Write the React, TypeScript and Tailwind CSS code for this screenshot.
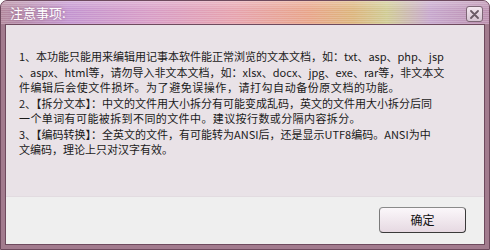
const lines = [
  { text: "1、本功能只能用来编辑用记事本软件能正常浏览的文本文档，如：txt、asp、php、jsp", tracking: "" },
  { text: "、aspx、html等，请勿导入非文本文档，如：xlsx、docx、jpg、exe、rar等，非文本文", tracking: "" },
  { text: "件编辑后会使文件损坏。为了避免误操作，请打勾自动备份原文档的功能。", tracking: "tracking-[0.55px]" },
  { text: "2、【拆分文本】：中文的文件用大小拆分有可能变成乱码，英文的文件用大小拆分后同", tracking: "" },
  { text: "一个单词有可能被拆到不同的文件中。建议按行数或分隔内容拆分。", tracking: "tracking-[0.4px]" },
  { text: "3、【编码转换】：全英文的文件，有可能转为ANSI后，还是显示UTF8编码。ANSI为中", tracking: "" },
  { text: "文编码，理论上只对汉字有效。", tracking: "" },
];

const App = () => {
  return (
    <div className="w-[490px] h-[250px] flex flex-col overflow-hidden rounded-t-[7px] border border-[#6e4a5e] bg-[#a27b8e] font-['Noto_Sans_CJK_SC',sans-serif]">
      {/* title bar */}
      <div className="relative h-[23px] shrink-0 flex items-center px-[9px] bg-[linear-gradient(to_right,#b3889d_0%,#c394cf_14%,#d79cc6_30%,#e6a2ad_48%,#e8a489_63%,#dcb47c_72%,#cfca92_79%,#c6a6cc_88%,#bb8eae_100%)]">
        <div className="absolute inset-0 bg-[repeating-linear-gradient(to_bottom,rgba(255,255,255,0.18)_0px,rgba(255,255,255,0.18)_1px,transparent_1px,transparent_2px)]" />
        <div className="absolute inset-x-0 top-0 h-[9px] bg-[linear-gradient(to_bottom,rgba(255,255,255,0.25),rgba(255,255,255,0))]" />
        <span className="relative text-[13px] leading-none text-white [text-shadow:0_0_3px_rgba(120,70,110,0.6)]">
          注意事项:
        </span>
        <button className="absolute right-[6px] top-[5px] w-[17px] h-[16px] flex items-center justify-center rounded-[3px] border border-[#7d6675] bg-[linear-gradient(to_bottom,#f4e8f0,#d6c4d2)]">
          <svg width="9" height="9" viewBox="0 0 9 9">
            <path d="M1 1L8 8M8 1L1 8" stroke="#6a5a66" strokeWidth="1.8" strokeLinecap="round" />
          </svg>
        </button>
      </div>

      {/* body */}
      <div className="flex-1 flex flex-col mx-[4px] mb-[4px] border border-[#6e4a5e] bg-[#efefef]">
        <div className="h-[172px] shrink-0 bg-[#e9e2e7] border-b border-[#e2dbe0] pl-[13px] pt-[24px] text-[11px] leading-[15.5px] text-[#1a1a1a]">
          {lines.map((line, i) => (
            <div key={i} className={`whitespace-nowrap ${line.tracking}`}>
              {line.text}
            </div>
          ))}
        </div>
        <div className="flex-1 flex justify-end items-start pr-[18px] pt-[10px]">
          <button className="w-[87px] h-[26px] rounded-[4px] border border-[#3a3a3a] border-t-[#8a8a8a] border-l-[#7a7a7a] bg-[linear-gradient(to_bottom,#fbf7fa,#e6d9e2)] text-[12px] text-[#111]">
            确定
          </button>
        </div>
      </div>
    </div>
  );
};

export default App;
